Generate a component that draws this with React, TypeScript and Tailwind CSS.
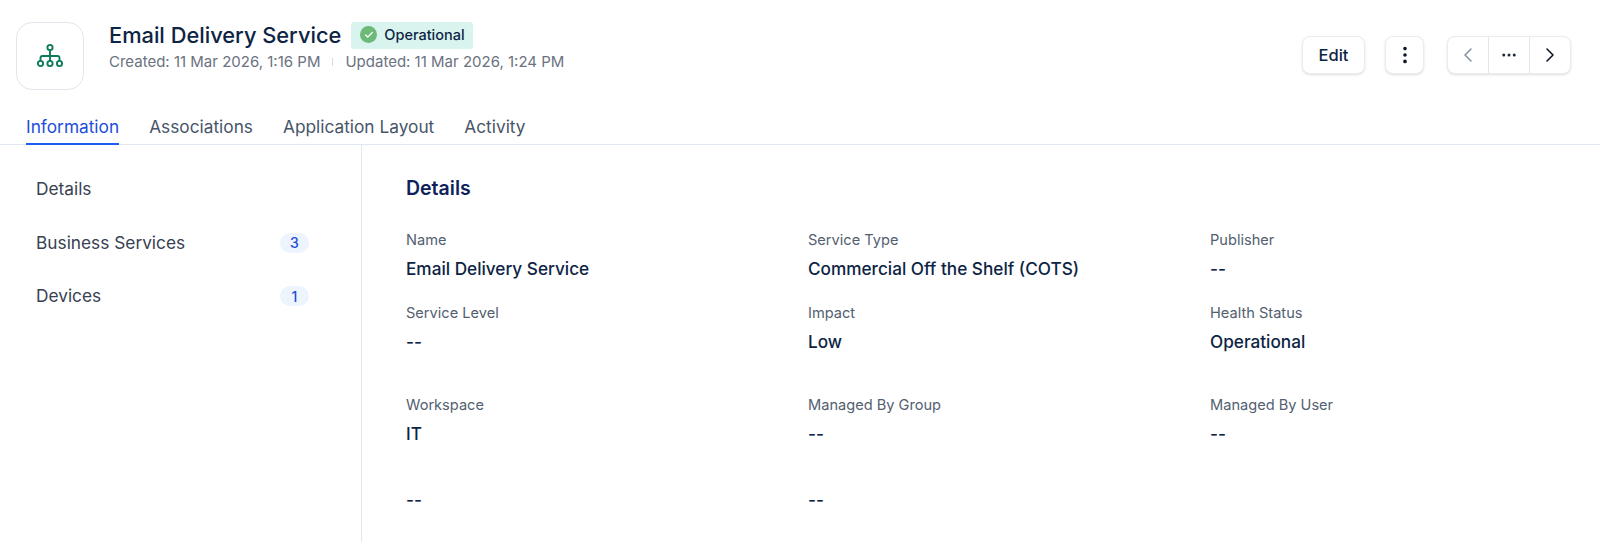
import { Check, ChevronLeft, ChevronRight, Ellipsis, EllipsisVertical } from 'lucide-react';

const fields = [
  { label: 'Name', value: 'Email Delivery Service' },
  { label: 'Service Type', value: 'Commercial Off the Shelf (COTS)' },
  { label: 'Publisher', value: '--' },
  { label: 'Service Level', value: '--' },
  { label: 'Impact', value: 'Low' },
  { label: 'Health Status', value: 'Operational' },
  { label: 'Workspace', value: 'IT' },
  { label: 'Managed By Group', value: '--' },
  { label: 'Managed By User', value: '--' },
  { label: '', value: '--' },
  { label: '', value: '--' },
];

const tabs = ['Information', 'Associations', 'Application Layout', 'Activity'];

const sideItems = [
  { label: 'Details' },
  { label: 'Business Services', count: 3 },
  { label: 'Devices', count: 1 },
];

function ServiceIcon() {
  return (
    <svg width="28" height="28" viewBox="0 0 28 28" fill="none" stroke="#0f7a5a" strokeWidth="1.9">
      <circle cx="14" cy="5.5" r="2.6" />
      <circle cx="4.5" cy="21.5" r="2.6" />
      <circle cx="14" cy="21.5" r="2.6" />
      <circle cx="23.5" cy="21.5" r="2.6" />
      <path d="M14 8v11M4.5 19v-3a2 2 0 0 1 2-2h15a2 2 0 0 1 2 2v3" />
    </svg>
  );
}

export default function App() {
  return (
    <div className="h-[542px] w-[1600px] overflow-hidden bg-white font-['Inter',sans-serif]">
      <div className="flex h-[110px] items-start justify-between pl-4 pr-[29px] pt-[22px]">
        <div className="flex items-start">
          <div className="flex h-[68px] w-[68px] items-center justify-center rounded-2xl border border-[#e2e6ec] bg-white">
            <ServiceIcon />
          </div>
          <div className="ml-[25px]">
            <div className="flex items-center">
              <h1 className="text-[21.8px] font-medium leading-[25px] text-[#0d2444]">Email Delivery Service</h1>
              <div className="ml-[10px] flex h-[27px] items-center gap-[7px] rounded-[3px] bg-[#d9f3ee] pb-[2px] pl-[9px] pr-[8px]">
                <span className="flex h-[17px] w-[17px] items-center justify-center rounded-full bg-[#6cb978]">
                  <Check className="h-[10px] w-[10px] text-white" strokeWidth={3} />
                </span>
                <span className="text-[14.5px] font-medium text-[#0d2444]">Operational</span>
              </div>
            </div>
            <div className="mt-[2px] flex items-center text-[15px] text-[#6b7280]">
              <span>Created: 11 Mar 2026, 1:16 PM</span>
              <span className="mx-[12px] h-[8px] w-px bg-[#d5d9e0]" />
              <span>Updated: 11 Mar 2026, 1:24 PM</span>
            </div>
          </div>
        </div>
        <div className="mt-[14px] flex items-center">
          <button className="flex h-[38px] w-[63px] items-center justify-center rounded-lg border border-[#e9edf2] bg-white text-[16.5px] font-medium text-[#0d2444] shadow-sm">
            Edit
          </button>
          <button className="ml-[20px] flex h-[38px] w-[39px] items-center justify-center rounded-lg border border-[#e9edf2] bg-white text-[#0f172a] shadow-sm">
            <EllipsisVertical className="h-[22px] w-[22px]" />
          </button>
          <div className="ml-[23px] flex h-[38px] items-center rounded-lg border border-[#e9edf2] bg-white shadow-sm">
            <span className="flex h-full w-[41px] items-center justify-center border-r border-[#e2e6ec] text-[#8a94a3]">
              <ChevronLeft className="h-6 w-6" strokeWidth={1.6} />
            </span>
            <span className="flex h-full w-[41px] items-center justify-center border-r border-[#e2e6ec] text-[#1f2937]">
              <Ellipsis className="h-[18px] w-[18px]" />
            </span>
            <span className="flex h-full w-[40px] items-center justify-center text-[#0f172a]">
              <ChevronRight className="h-6 w-6" strokeWidth={1.6} />
            </span>
          </div>
        </div>
      </div>

      <div className="flex h-[35px] gap-[30px] border-b border-[#e2e8f0] pl-[26px]">
        {tabs.map((tab, i) => (
          <div
            key={tab}
            className={
              i === 0
                ? 'h-[35px] border-b-2 border-[#1d5cf5] pt-[5px] text-[17.3px] leading-[24px] text-[#1d4ed8]'
                : 'h-[35px] pt-[5px] text-[17.3px] leading-[24px] text-[#475569]'
            }
          >
            {tab}
          </div>
        ))}
      </div>

      <div className="flex h-[397px]">
        <div className="w-[362px] shrink-0 border-r border-[#e2e8f0] pl-[36px] pr-[52px] pt-[32px]">
          <div className="flex flex-col gap-[29.5px]">
            {sideItems.map((item) => (
              <div key={item.label} className="flex h-6 items-center justify-between text-[17.3px] text-[#374151]">
                <span>{item.label}</span>
                {item.count && (
                  <span className="flex h-[20px] w-[29px] items-center justify-center rounded-full bg-[#edf4fd] text-[14px] font-medium text-[#1d4ed8]">
                    {item.count}
                  </span>
                )}
              </div>
            ))}
          </div>
        </div>
        <div className="flex-1 pl-[44px] pt-[31px]">
          <h2 className="text-[19.5px] font-semibold leading-6 text-[#101f5c]">Details</h2>
          <div className="mt-[30px] grid grid-cols-[402px_402px_1fr]">
            {fields.map((field, i) => (
              <div key={i} className={i >= 6 ? 'h-[66px]' : i >= 3 ? 'h-[92px]' : 'h-[73px]'}>
                <div className="h-5 text-[14.6px] leading-5 text-[#526070]">{field.label}</div>
                <div className="mt-[7px] text-[17.2px] font-medium leading-6 text-[#0d2444]">{field.value}</div>
              </div>
            ))}
          </div>
        </div>
      </div>
    </div>
  );
}
